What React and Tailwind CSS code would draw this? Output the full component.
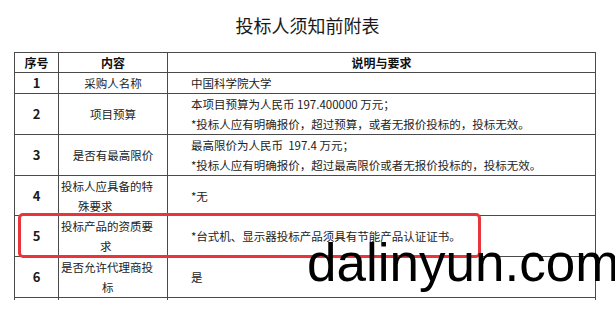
import React from "react";

const cjk = { fontFamily: '"Noto Sans CJK SC", "Noto Sans", sans-serif' };

function Row({ h, no, name, desc }) {
  return (
    <div className={`flex border-b border-[#4a4a4a] ${h}`}>
      <div className="w-[44px] shrink-0 border-r border-[#4a4a4a] flex items-center justify-center text-[13px] font-bold text-[#1a1a1a]">
        {no}
      </div>
      <div className="w-[109px] shrink-0 border-r border-[#4a4a4a] flex flex-col justify-center text-[11.5px] leading-[20px] text-[#222]">
        {name}
      </div>
      <div className="flex-1 flex flex-col justify-center pl-[23px] text-[11.5px] leading-[20px] text-[#222]">
        {desc}
      </div>
    </div>
  );
}

export default function App() {
  return (
    <div className="relative w-[615px] h-[311px] overflow-hidden bg-white" style={cjk}>
      <div className="pt-[13px] h-[52px] text-center text-[18px] leading-[24px] text-[#1a1a1a]">
        投标人须知前附表
      </div>
      <div className="ml-[14px] w-[582px] border-t border-l border-r border-[#4a4a4a]">
        <div className="flex border-b border-[#4a4a4a] h-[20px]">
          <div className="w-[44px] shrink-0 border-r border-[#4a4a4a] flex items-center justify-center text-[12px] font-bold text-[#111]">序号</div>
          <div className="w-[109px] shrink-0 border-r border-[#4a4a4a] flex items-center justify-center text-[12px] font-bold text-[#111]">内容</div>
          <div className="flex-1 flex items-center justify-center text-[12px] font-bold text-[#111]">说明与要求</div>
        </div>
        <Row h="h-[21px]" no="1" name={<div className="text-center">采购人名称</div>} desc={<div>中国科学院大学</div>} />
        <Row
          h="h-[41px]"
          no="2"
          name={<div className="text-center">项目预算</div>}
          desc={
            <>
              <div>本项目预算为人民币 197.400000 万元；</div>
              <div>*投标人应有明确报价，超过预算，或者无报价投标的，投标无效。</div>
            </>
          }
        />
        <Row
          h="h-[41px]"
          no="3"
          name={<div className="text-center">是否有最高限价</div>}
          desc={
            <>
              <div className="whitespace-pre">最高限价为人民币  197.4 万元；</div>
              <div>*投标人应有明确报价，超过最高限价或者无报价投标的，投标无效。</div>
            </>
          }
        />
        <Row
          h="h-[40px]"
          no="4"
          name={
            <>
              <div className="pl-[2px]">投标人应具备的特</div>
              <div className="pl-[19px]">殊要求</div>
            </>
          }
          desc={<div>*无</div>}
        />
        <Row
          h="h-[41px]"
          no="5"
          name={
            <>
              <div className="pl-[2px]">投标产品的资质要</div>
              <div className="pl-[41px]">求</div>
            </>
          }
          desc={<div>*台式机、显示器投标产品须具有节能产品认证证书。</div>}
        />
        <Row
          h="h-[41px]"
          no="6"
          name={
            <>
              <div className="pl-[2px]">是否允许代理商投</div>
              <div className="pl-[43px]">标</div>
            </>
          }
          desc={<div>是</div>}
        />
        <div className="flex h-[2px]">
          <div className="w-[44px] shrink-0 border-r border-[#4a4a4a]" />
          <div className="w-[109px] shrink-0 border-r border-[#4a4a4a]" />
          <div className="flex-1" />
        </div>
      </div>
      <div className="absolute left-[18px] top-[213px] w-[463px] h-[45px] border-[3px] border-[#e8353b] rounded-[5px]" />
      <div
        className="absolute left-[307px] top-[236px] text-[53px] leading-none text-black whitespace-nowrap"
        style={{ fontFamily: '"Liberation Sans", Arial, sans-serif' }}
      >
        dalinyun.com
      </div>
    </div>
  );
}
